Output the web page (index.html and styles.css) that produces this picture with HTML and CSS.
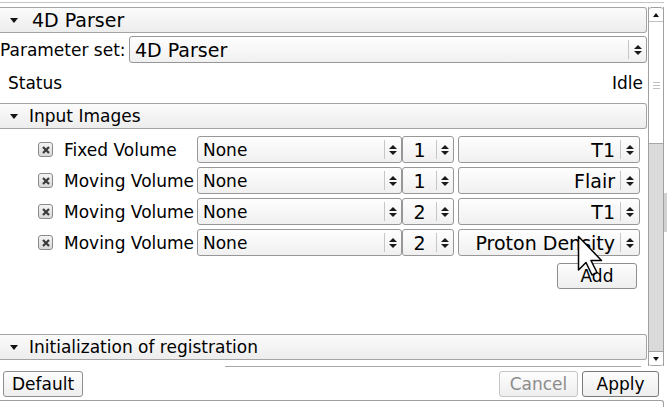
FILE: index.html
```html
<!DOCTYPE html>
<html lang="en">
  <head>
    <meta charset="UTF-8" />
    <meta name="viewport" content="width=device-width, initial-scale=1.0" />
    <title>4D Parser</title>
    <link rel="stylesheet" href="styles.css">
  </head>
  <body>
    <div class="window">
      <div class="panel">
        <div class="scroll-area">
          <div class="content">
            <div class="section-header big">
              <span class="caret"></span>4D Parser
            </div>

            <div class="param-row">
              <span class="param-label">Parameter set:</span>
              <div class="combo param-combo">
                <span class="combo-text">4D Parser</span>
                <span class="combo-sep"></span>
                <span class="arrows"></span>
              </div>
            </div>

            <div class="status-row">
              <span>Status</span>
              <span>Idle</span>
            </div>

            <div class="section-header">
              <span class="caret"></span>Input Images
            </div>

            <div class="image-list" id="image-list">
              <!-- Image rows are added here -->
            </div>

            <div class="add-row">
              <button class="btn add-btn">Add</button>
            </div>

            <div class="spacer"></div>

            <div class="section-header last">
              <span class="caret"></span>Initialization of registration
            </div>
          </div>

          <div class="scrollbar">
            <div class="sb-btn sb-up"><span class="sb-arrow up"></span></div>
            <div class="sb-thumb"><span class="grip"></span></div>
            <div class="sb-track"></div>
            <div class="sb-btn sb-down"><span class="sb-arrow down"></span></div>
          </div>
        </div>

        <div class="divider"></div>

        <div class="button-bar">
          <button class="btn default-btn">Default</button>
          <span class="bar-spacer"></span>
          <button class="btn cancel-btn" disabled>Cancel</button>
          <button class="btn apply-btn">Apply</button>
        </div>

        <div class="footer-line"></div>
      </div>

      <div class="edge"><div class="edge-thumb"></div></div>
    </div>

    <!-- mouse pointer on top of the Add button -->
    <svg class="cursor" width="26" height="42" viewBox="0 0 26 42">
      <path d="M1.5 1.5 V35 L9 27.5 L15 40 L20 37.5 L14 25.5 H24.5 Z"
            fill="#fff" stroke="#000" stroke-width="1.5" stroke-linejoin="round" />
    </svg>

    <script>
      // Rows of the "Input Images" section
      const images = [
        { label: "Fixed Volume", volume: "None", index: 1, type: "T1" },
        { label: "Moving Volume", volume: "None", index: 1, type: "Flair" },
        { label: "Moving Volume", volume: "None", index: 2, type: "T1" },
        { label: "Moving Volume", volume: "None", index: 2, type: "Proton Density" },
      ];

      const list = document.getElementById("image-list");
      list.innerHTML = images
        .map(
          (img) => `
            <div class="image-row">
              <span class="checkbox">
                <svg width="10" height="10" viewBox="0 0 10 10">
                  <path d="M2 2 L8 8 M8 2 L2 8" stroke="#3a3a3a" stroke-width="2.2" />
                </svg>
              </span>
              <span class="row-label">${img.label}</span>
              <div class="combo volume-combo">
                <span class="combo-text">${img.volume}</span>
                <span class="combo-sep"></span>
                <span class="arrows"></span>
              </div>
              <div class="combo spin">
                <span class="combo-text">${img.index}</span>
                <span class="combo-sep"></span>
                <span class="arrows"></span>
              </div>
              <div class="combo type-combo">
                <span class="combo-text">${img.type}</span>
                <span class="combo-sep"></span>
                <span class="arrows"></span>
              </div>
            </div>
          `
        )
        .join("");
    </script>
  </body>
</html>
```

FILE: styles.css
```css
body {
  margin: 0;
  background-color: #fff;
  color: #000;
  font-family: "DejaVu Sans", sans-serif;
  font-size: 17px;
  overflow: hidden;
}

.window {
  display: flex;
  width: 667px;
  height: 407px;
}

.panel {
  width: 664px;
  margin-top: 2px;
  border-top: 1px solid #c4c4c4;
  display: flex;
  flex-direction: column;
}

.scroll-area {
  display: flex;
  height: 359px;
  margin-top: 4px;
}

.content {
  width: 648px;
  display: flex;
  flex-direction: column;
  overflow: hidden;
}

/* collapsible section titles */
.section-header {
  height: 24px;
  line-height: 24px;
  margin-right: 1px;
  border: 1px solid #a4a4a4;
  border-left: none;
  border-radius: 0 3px 3px 0;
  background: linear-gradient(#fbfbfb, #ededed);
  display: flex;
  align-items: center;
  white-space: nowrap;
}

.section-header.big {
  font-size: 19px;
}

.section-header.last {
  margin-bottom: 6px;
}

.caret {
  width: 0;
  height: 0;
  margin-left: 10px;
  margin-right: 11px;
  border-left: 4px solid transparent;
  border-right: 4px solid transparent;
  border-top: 5px solid #111;
}

.big .caret {
  margin-right: 14px;
}

.param-row {
  display: flex;
  align-items: center;
  margin-top: 3px;
  height: 27px;
}

.param-label {
  width: 129px;
  white-space: nowrap;
}

/* combo boxes and spin boxes */
.combo {
  box-sizing: border-box;
  height: 27px;
  display: flex;
  align-items: center;
  border: 1px solid #979797;
  border-radius: 3px;
  background: linear-gradient(#fefefe, #f0f0f0);
}

.combo-text {
  flex: 1;
  padding-left: 5px;
  white-space: nowrap;
  overflow: hidden;
}

.combo-sep {
  width: 1px;
  height: 19px;
  background-color: #c6c6c6;
}

.arrows {
  width: 16px;
  display: flex;
  flex-direction: column;
  align-items: center;
  gap: 2px;
}

.arrows::before,
.arrows::after {
  content: "";
  width: 0;
  height: 0;
  border-left: 4px solid transparent;
  border-right: 4px solid transparent;
}

.arrows::before {
  border-bottom: 4px solid #1a1a1a;
}

.arrows::after {
  border-top: 4px solid #1a1a1a;
}

.param-combo {
  width: 518px;
  font-size: 19px;
}

.param-combo .arrows {
  width: 17px;
}

.status-row {
  height: 40px;
  display: flex;
  align-items: center;
  justify-content: space-between;
  padding: 0 5px 0 8px;
}

.image-list {
  margin-top: 7px;
  display: flex;
  flex-direction: column;
  gap: 4px;
}

.image-row {
  display: flex;
  align-items: center;
  height: 27px;
  padding-left: 38px;
}

.checkbox {
  box-sizing: border-box;
  width: 15px;
  height: 15px;
  border: 1px solid #8a8a8a;
  border-radius: 3px;
  background: linear-gradient(#f4f4f4, #d8d8d8);
  display: flex;
  align-items: center;
  justify-content: center;
  margin-right: 11px;
}

.row-label {
  width: 133px;
  white-space: nowrap;
}

.volume-combo {
  width: 205px;
}

.spin {
  width: 52px;
  font-size: 19px;
}

.spin .combo-text {
  padding-left: 0;
  text-align: center;
}

.type-combo {
  width: 182px;
  margin-left: 4px;
  font-size: 19px;
}

.type-combo .combo-text {
  text-align: right;
  padding-right: 5px;
}

.type-combo .arrows {
  width: 18px;
}

.add-row {
  margin-top: 7px;
  height: 26px;
  display: flex;
  padding-left: 557px;
}

.spacer {
  flex: 1;
}

/* buttons */
.btn {
  box-sizing: border-box;
  height: 26px;
  padding: 0;
  font-family: inherit;
  font-size: 17px;
  color: #000;
  border: 1px solid #8e8e8e;
  border-radius: 3px;
  background: linear-gradient(#fdfdfd, #eeeeee);
}

.add-btn {
  width: 80px;
}

.default-btn {
  width: 80px;
  margin-left: 3px;
}

.cancel-btn {
  width: 79px;
  color: #8c8c8c;
  border-color: #c4c4c4;
}

.apply-btn {
  width: 77px;
  margin-left: 4px;
  border-color: #7a7a7a;
}

/* scrollbar of the parameters area */
.scrollbar {
  box-sizing: border-box;
  width: 16px;
  border-left: 1px solid #a0a0a0;
  border-right: 1px solid #a0a0a0;
  display: flex;
  flex-direction: column;
}

.sb-btn {
  height: 13px;
  display: flex;
  align-items: center;
  justify-content: center;
  background-color: #fff;
}

.sb-up {
  border-top: 1px solid #a0a0a0;
  border-bottom: 1px solid #c0c0c0;
  border-radius: 3px 3px 0 0;
}

.sb-down {
  border-top: 1px solid #a0a0a0;
  border-bottom: 1px solid #a0a0a0;
  border-radius: 0 0 3px 3px;
}

.sb-arrow {
  width: 0;
  height: 0;
  border-left: 3.5px solid transparent;
  border-right: 3.5px solid transparent;
}

.sb-arrow.up {
  border-bottom: 4px solid #111;
}

.sb-arrow.down {
  border-top: 4px solid #111;
}

.sb-thumb {
  height: 121px;
  background-color: #fff;
  border-bottom: 1px solid #a8a8a8;
  display: flex;
  justify-content: center;
}

.grip {
  width: 7px;
  height: 5px;
  margin-top: 60px;
  border-top: 1px solid #c0c0c0;
  border-bottom: 1px solid #c0c0c0;
  background: linear-gradient(#fff 2px, #c0c0c0 2px, #c0c0c0 3px, #fff 3px);
}

.sb-track {
  flex: 1;
  background-color: #dadada;
}

.divider {
  height: 1px;
  width: 416px;
  margin-left: 225px;
  background-color: #a8a8a8;
}

.button-bar {
  display: flex;
  margin-top: 4px;
  padding-right: 5px;
}

.bar-spacer {
  flex: 1;
}

.footer-line {
  margin-top: 3px;
  height: 6px;
  border-top: 1px solid #a0a0a0;
  border-right: 1px solid #a0a0a0;
  border-radius: 0 3px 0 0;
}

.edge {
  width: 3px;
}

.edge-thumb {
  margin-top: 193px;
  height: 39px;
  background-color: #d2d2d2;
}

.cursor {
  position: absolute;
  left: 577px;
  top: 235px;
}
```
